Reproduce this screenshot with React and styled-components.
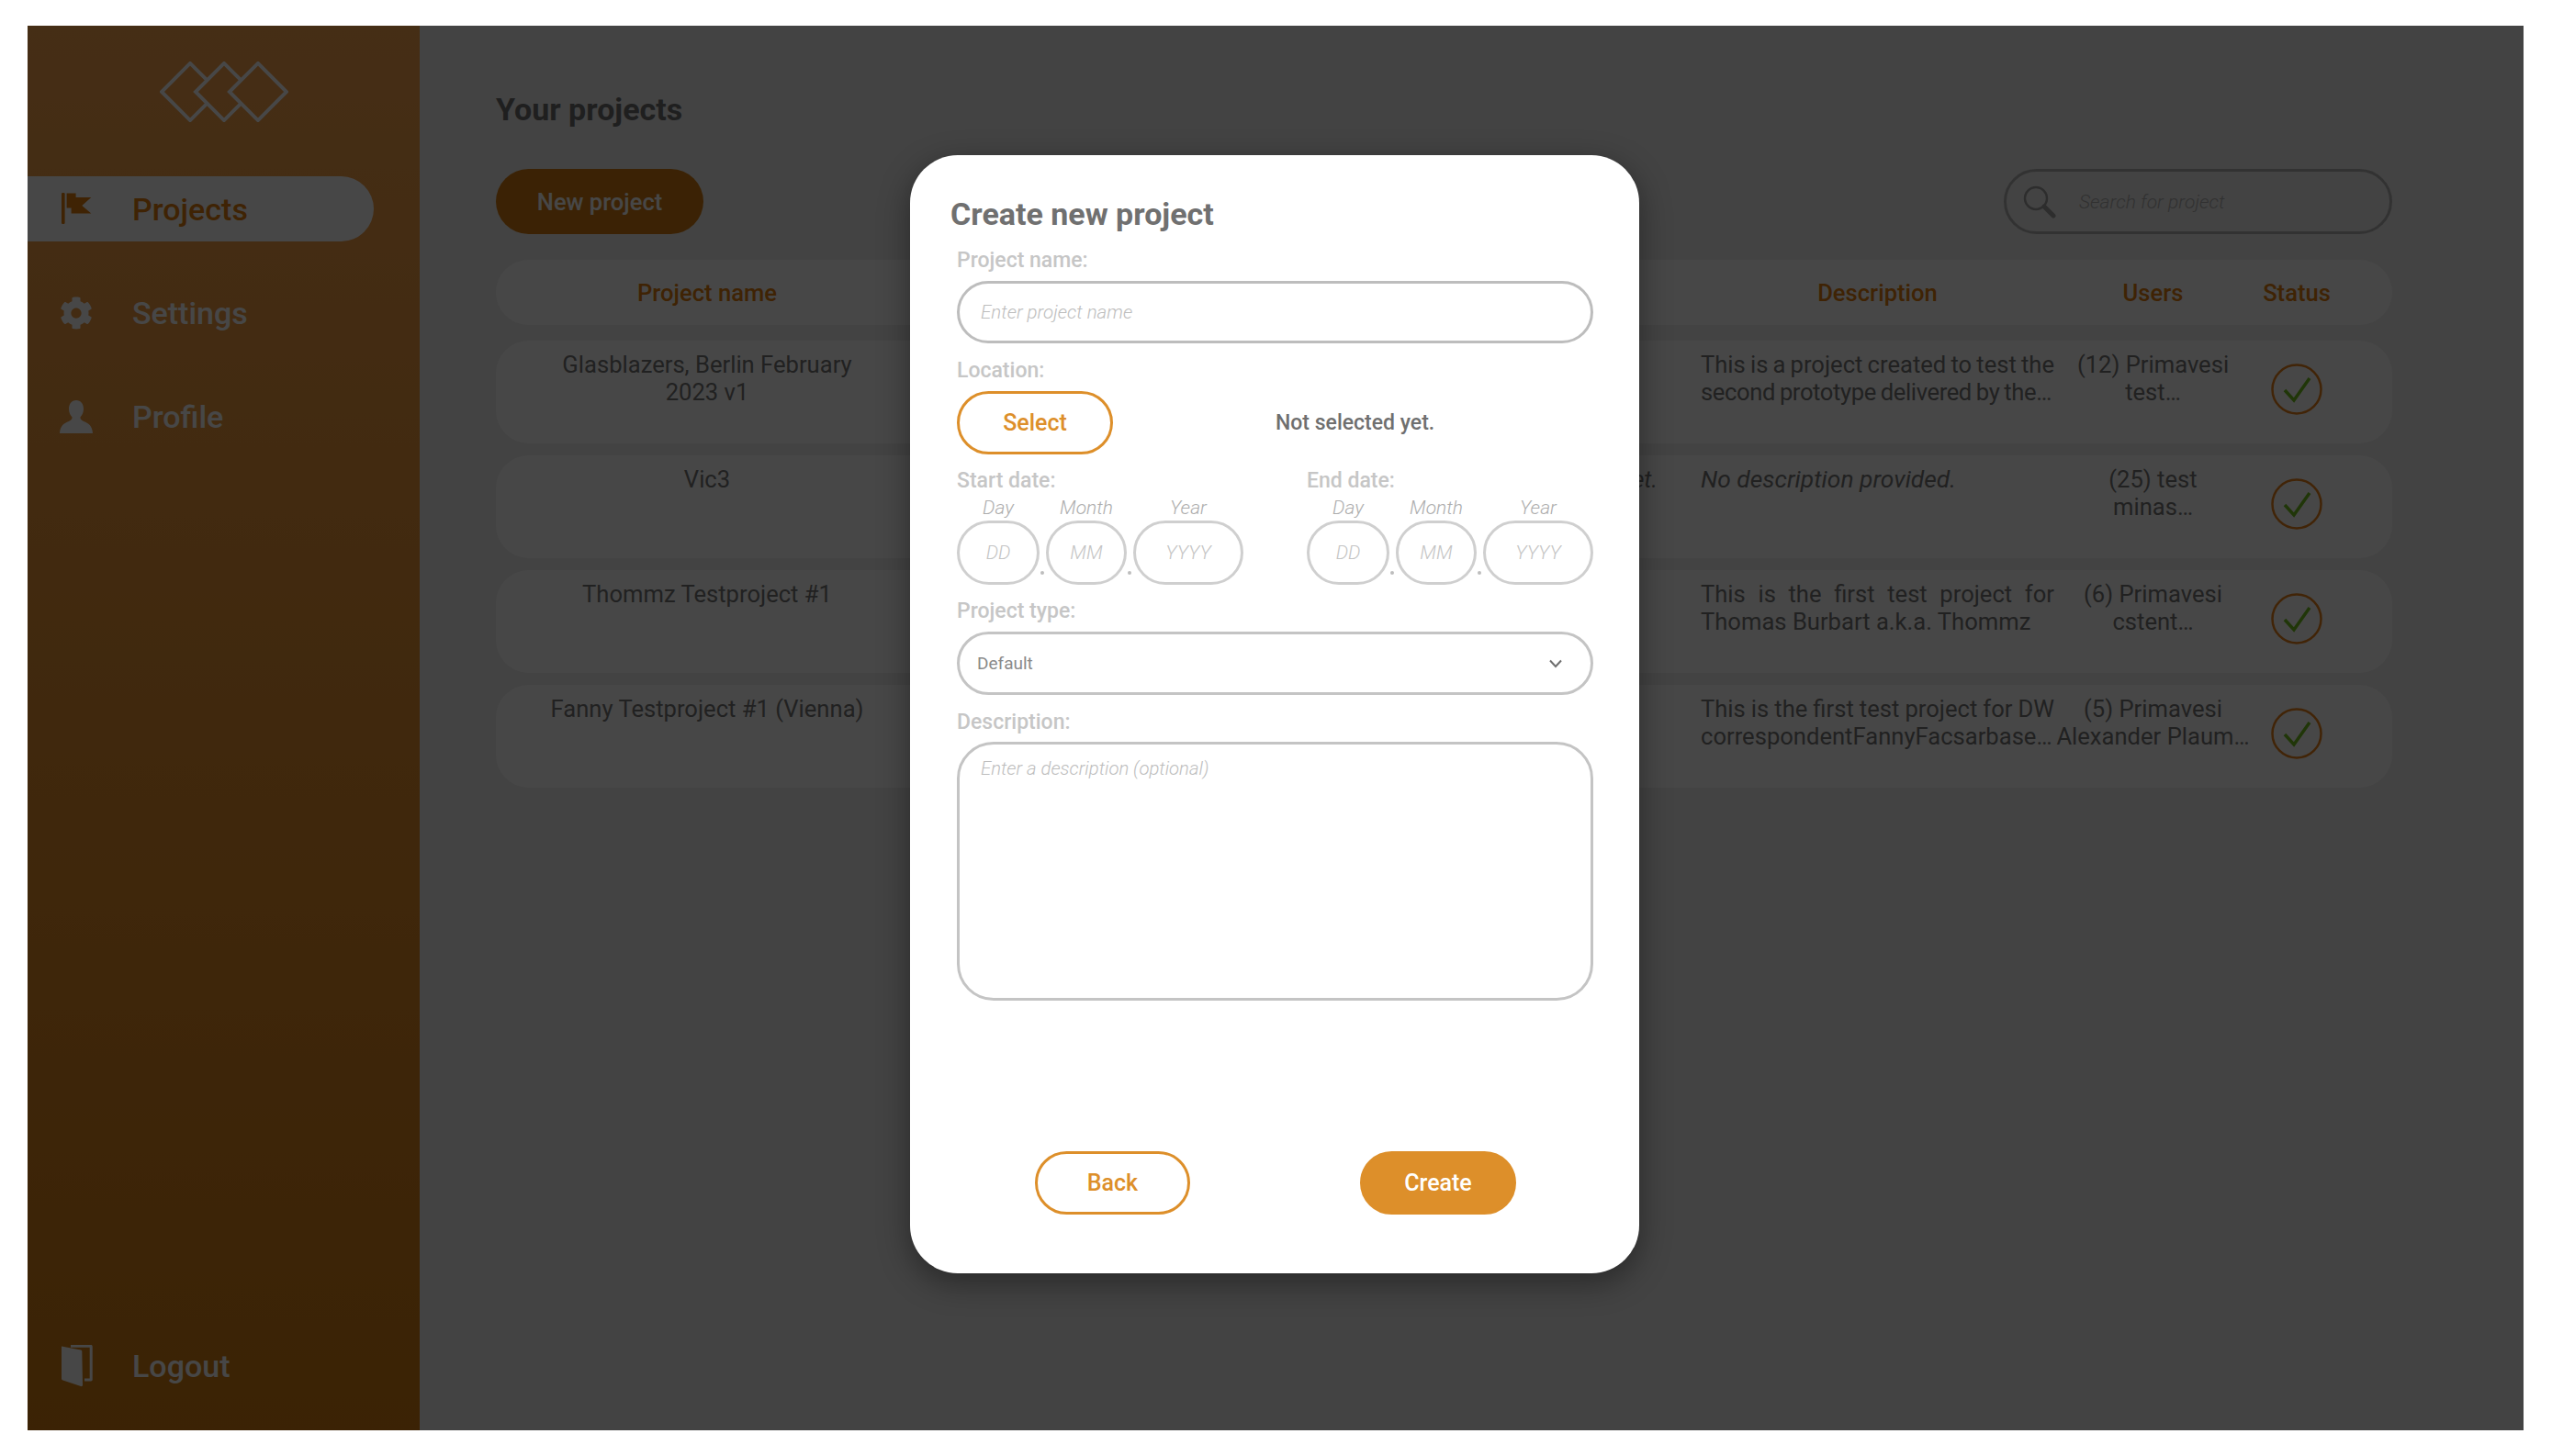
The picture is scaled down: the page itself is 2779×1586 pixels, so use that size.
import React from "react"
import styled, { createGlobalStyle } from "styled-components"
import { FaCog } from "react-icons/fa"

const ORANGE = "#dd8f2a"

const GlobalStyle = createGlobalStyle`
  * {
    box-sizing: border-box;
  }
  body {
    margin: 0;
    background: #fff;
    font-family: Roboto, "Liberation Sans", sans-serif;
  }
`

const Frame = styled.div`
  position: relative;
  display: flex;
  height: 1530px;
  margin: 28px 31px 28px 30px;
  background: #f1f1f1;
  overflow: hidden;
`

const Sidebar = styled.aside`
  display: flex;
  flex-direction: column;
  flex: 0 0 427px;
  padding: 39px 0 35px;
  background: linear-gradient(180deg, #f8a44e 0%, #d27c12 100%);
`

const Logo = styled.svg`
  display: block;
  align-self: center;
  width: 140px;
  height: 66px;
  margin-bottom: 59px;
`

const NavItem = styled.div`
  display: flex;
  align-items: center;
  gap: 43px;
  width: 377px;
  height: 71px;
  margin-bottom: ${props => (props.$last ? "0" : "42px")};
  margin-top: ${props => (props.$last ? "auto" : "0")};
  padding-left: 35px;
  border-radius: 0 36px 36px 0;
  background: ${props => (props.$active ? "#fff" : "transparent")};
  color: ${props => (props.$active ? "#e07f10" : "#fff")};
  font-size: 34px;
  font-weight: 500;
`

const NavIcon = styled.span`
  display: flex;
  justify-content: center;
  width: 36px;
  svg {
    display: block;
  }
`

const Main = styled.main`
  flex: 1;
  padding: 72px 143px 0 83px;
`

const Title = styled.h1`
  margin: 0 0 46px;
  font-size: 34px;
  line-height: 38px;
  font-weight: 700;
  color: #707070;
`

const Toolbar = styled.div`
  display: flex;
  justify-content: space-between;
  margin-bottom: 28px;
`

const NewButton = styled.button`
  width: 226px;
  height: 71px;
  border: none;
  border-radius: 36px;
  background: #d27c12;
  color: #fff;
  font: 500 25.5px Roboto, sans-serif;
`

const Search = styled.div`
  display: flex;
  align-items: center;
  gap: 25px;
  width: 423px;
  height: 71px;
  padding-left: 18px;
  border: 3px solid #b5b5b5;
  border-radius: 36px;
  color: #b0b0b0;
  font-size: 21px;
  font-style: italic;
  font-weight: 300;
`

const TableHead = styled.div`
  display: grid;
  grid-template-columns: 420px 872px 385px 215px 98px;
  align-items: center;
  height: 71px;
  margin-bottom: 17px;
  padding-left: 20px;
  border-radius: 36px;
  background: #fff;
  color: #e07f10;
  font-size: 25.6px;
  font-weight: 500;
  text-align: center;
`

const TableRow = styled.div`
  display: grid;
  grid-template-columns: 420px 872px 385px 215px 98px;
  height: 112px;
  margin-bottom: 13px;
  padding: 11px 0 0 20px;
  border-radius: 36px;
  background: #fff;
  color: #787878;
  font-size: 25.6px;
  line-height: 30px;
`

const NameCell = styled.div`
  padding: 0 30px;
  text-align: center;
`

const LocationCell = styled.div`
  padding-right: 47px;
  font-style: italic;
  text-align: right;
  white-space: nowrap;
`

const DescCell = styled.div`
  font-size: ${props => (props.$empty ? "26.4px" : "inherit")};
  font-style: ${props => (props.$empty ? "italic" : "normal")};
  word-spacing: ${props => (props.$squeeze ? "-2px" : "0")};
  text-align: justify;
`

const TightLine = styled.span`
  letter-spacing: -0.4px;
  word-spacing: -1px;
  white-space: nowrap;
`

const UsersCell = styled.div`
  text-align: center;
  white-space: nowrap;
`

const StatusCell = styled.div`
  display: flex;
  justify-content: center;
  padding-top: 14px;
`

const Overlay = styled.div`
  position: absolute;
  inset: 0;
  display: flex;
  justify-content: center;
  padding: 141px 2px 0 0;
  background: rgba(0, 0, 0, 0.72);
`

const Modal = styled.section`
  display: flex;
  flex-direction: column;
  width: 794px;
  height: 1218px;
  padding: 45px 50px 64px 44px;
  border-radius: 52px;
  background: #fff;
  box-shadow: 0 10px 34px rgba(0, 0, 0, 0.4);
`

const ModalTitle = styled.h2`
  margin: 0 0 18px;
  font-size: 34px;
  line-height: 38px;
  font-weight: 700;
  color: #707070;
`

const Form = styled.div`
  display: flex;
  flex-direction: column;
  flex: 1;
  margin-left: 7px;
`

const Label = styled.label`
  display: block;
  margin-top: 1px;
  margin-bottom: ${props => (props.$gap || 10) - 1}px;
  font-size: 23px;
  line-height: 26px;
  font-weight: 500;
  color: #c6c6c6;
`

const Field = styled.div`
  margin-bottom: ${props => props.$gap || 16}px;
`

const TextInput = styled.input`
  display: block;
  width: 100%;
  height: 68px;
  padding: 0 23px;
  border: 3px solid #bdbdbd;
  border-radius: 34px;
  outline: none;
  background: #fff;
  font: italic 300 20.5px Roboto, sans-serif;
  &::placeholder {
    color: #bdbdbd;
    opacity: 1;
  }
`

const LocationRow = styled.div`
  display: flex;
  align-items: center;
  gap: 177px;
`

const OutlineButton = styled.button`
  width: ${props => props.$width}px;
  height: 69px;
  border: 3px solid ${ORANGE};
  border-radius: 35px;
  background: #fff;
  color: ${ORANGE};
  font: 500 25px Roboto, sans-serif;
`

const SolidButton = styled(OutlineButton)`
  background: ${ORANGE};
  color: #fff;
`

const LocationText = styled.span`
  font-size: 23px;
  font-weight: 500;
  color: #6f6f6f;
`

const DateRow = styled.div`
  display: grid;
  grid-template-columns: 312px 312px;
  justify-content: space-between;
  margin-bottom: 15px;
`

const DateParts = styled.div`
  display: grid;
  grid-template-columns: 90px 88px 120px;
  column-gap: 7px;
`

const DatePart = styled.div`
  position: relative;
  &:not(:last-child)::after {
    content: "";
    position: absolute;
    right: -5px;
    bottom: 11px;
    width: 4px;
    height: 4px;
    border-radius: 50%;
    background: #bdbdbd;
  }
`

const DateCaption = styled.div`
  height: 24px;
  margin-bottom: 2px;
  font-size: 21px;
  line-height: 24px;
  font-style: italic;
  font-weight: 300;
  color: #adadad;
  text-align: center;
`

const DateInput = styled.input`
  display: block;
  width: 100%;
  height: 70px;
  padding: 0;
  border: 3px solid #cfcfcf;
  border-radius: 35px;
  outline: none;
  background: #fff;
  font: italic 300 21px Roboto, sans-serif;
  text-align: center;
  &::placeholder {
    color: #c4c4c4;
    opacity: 1;
  }
`

const SelectBox = styled.div`
  display: flex;
  align-items: center;
  justify-content: space-between;
  height: 69px;
  padding: 0 30px 0 19px;
  border: 3px solid #c4c4c4;
  border-radius: 35px;
  color: #8a8a8a;
  font-size: 19px;
`

const TextArea = styled.textarea`
  display: block;
  width: 100%;
  height: 282px;
  padding: 14px 23px;
  border: 3px solid #c4c4c4;
  border-radius: 40px;
  outline: none;
  resize: none;
  font: italic 300 20.3px Roboto, sans-serif;
  &::placeholder {
    color: #bdbdbd;
    opacity: 1;
  }
`

const Actions = styled.div`
  display: flex;
  justify-content: space-between;
  margin: auto 84px 0 85px;
`

const projects = [
  {
    name: "Glasblazers, Berlin February 2023 v1",
    desc: "This is a project created to test the",
    tight: "second prototype delivered by the…",
    squeeze: true,
    users: ["(12) Primavesi", "test…"],
  },
  {
    name: "Vic3",
    location: "Not selected yet.",
    desc: "No description provided.",
    empty: true,
    users: ["(25) test", "minas…"],
  },
  {
    name: "Thommz Testproject #1",
    desc: "This is the first test project for Thomas Burbart a.k.a. Thommz",
    users: ["(6) Primavesi", "cstent…"],
  },
  {
    name: "Fanny Testproject #1 (Vienna)",
    desc: "This is the first test project for DW correspondentFannyFacsarbase…",
    squeeze: true,
    users: ["(5) Primavesi", "Alexander Plaum…"],
  },
]

const FlagIcon = () => (
  <svg width="36" height="36" viewBox="0 0 36 36" fill="currentColor">
    <rect x="2" y="0" width="3.6" height="34" rx="1.2" />
    <path d="M7.6 .6h10v4.4h16.7l-10 9 10 8.6H12.6v-6H7.6z" />
  </svg>
)

const UserIcon = () => (
  <svg width="36" height="36" viewBox="0 0 36 36" fill="currentColor">
    <path d="M18 0c5 0 8 4 8 9.500 0 4-1.700 7-3.600 9 .1 2 1 3.300 3.800 4.500 5 2 9.300 4.500 9.800 13H0c.5-8.500 4.800-11 9.800-13 2.800-1.200 3.700-2.500 3.800-4.500-1.900-2-3.600-5-3.600-9C10 4 13 0 18 0z" />
  </svg>
)

const DoorIcon = () => (
  <svg width="36" height="46" viewBox="0 0 36 46" fill="currentColor">
    <path d="M2 1.500 23 5.500c.8.2 1.300.8 1.300 1.700L25 43.500c0 1.300-.9 2-2 1.600L3.500 38.600C2.500 38.200 2 37.500 2 36.500z" />
    <path d="M12 0h22c1 0 1.700.7 1.700 1.700v36c0 1-.7 1.700-1.700 1.700h-7v-2.800h5.700V2.800H12z" />
  </svg>
)

const SearchIcon = () => (
  <svg width="36" height="36" viewBox="0 0 36 36" fill="none" stroke="#a0a0a0">
    <circle cx="14" cy="14" r="12" strokeWidth="2.500" />
    <path d="M23 23l10 10" strokeWidth="5" strokeLinecap="round" />
  </svg>
)

const StatusIcon = () => (
  <svg width="56" height="56" viewBox="0 0 56 56" fill="none">
    <circle cx="28" cy="28" r="26.500" stroke="#e8821c" strokeWidth="2.500" />
    <path d="M15 29l10 11 17-24" stroke="#73c21f" strokeWidth="3.500" />
  </svg>
)

// each diamond hides the right corner of the one before it
const LogoMark = () => (
  <Logo viewBox="0 0 142 67" fill="none" stroke="#fff" strokeWidth="4">
    <path d="M52.250 20.750 33.500 2 2 33.500 33.500 65l18.750-18.750" />
    <path d="M89.750 20.750 71 2 39.500 33.500 71 65l18.750-18.750" />
    <path d="M108.500 2 140 33.500 108.500 65 77 33.500z" />
  </Logo>
)

const DateGroup = ({ label }) => (
  <div>
    <Label $gap={5}>{label}</Label>
    <DateParts>
      <DatePart>
        <DateCaption>Day</DateCaption>
        <DateInput placeholder="DD" />
      </DatePart>
      <DatePart>
        <DateCaption>Month</DateCaption>
        <DateInput placeholder="MM" />
      </DatePart>
      <DatePart>
        <DateCaption>Year</DateCaption>
        <DateInput placeholder="YYYY" />
      </DatePart>
    </DateParts>
  </div>
)

const App = () => (
  <>
    <GlobalStyle />
    <Frame>
      <Sidebar>
        <LogoMark />
        <NavItem $active>
          <NavIcon><FlagIcon /></NavIcon>
          Projects
        </NavItem>
        <NavItem>
          <NavIcon><FaCog size={36} /></NavIcon>
          Settings
        </NavItem>
        <NavItem>
          <NavIcon><UserIcon /></NavIcon>
          Profile
        </NavItem>
        <NavItem $last>
          <NavIcon><DoorIcon /></NavIcon>
          Logout
        </NavItem>
      </Sidebar>

      <Main>
        <Title>Your projects</Title>
        <Toolbar>
          <NewButton>New project</NewButton>
          <Search>
            <SearchIcon />
            Search for project
          </Search>
        </Toolbar>
        <TableHead>
          <span>Project name</span>
          <span />
          <span>Description</span>
          <span>Users</span>
          <span>Status</span>
        </TableHead>
        {projects.map(p => (
          <TableRow key={p.name}>
            <NameCell>{p.name}</NameCell>
            <LocationCell>{p.location}</LocationCell>
            <DescCell $empty={p.empty} $squeeze={p.squeeze}>
              {p.desc} {p.tight && <TightLine>{p.tight}</TightLine>}
            </DescCell>
            <UsersCell>{p.users[0]}<br />{p.users[1]}</UsersCell>
            <StatusCell><StatusIcon /></StatusCell>
          </TableRow>
        ))}
      </Main>

      <Overlay>
        <Modal>
          <ModalTitle>Create new project</ModalTitle>
          <Form>
            <Field>
              <Label>Project name:</Label>
              <TextInput placeholder="Enter project name" />
            </Field>
            <Field $gap={15}>
              <Label>Location:</Label>
              <LocationRow>
                <OutlineButton $width={170}>Select</OutlineButton>
                <LocationText>Not selected yet.</LocationText>
              </LocationRow>
            </Field>
            <DateRow>
              <DateGroup label="Start date:" />
              <DateGroup label="End date:" />
            </DateRow>
            <Field>
              <Label>Project type:</Label>
              <SelectBox>
                Default
                <svg width="16" height="10" viewBox="0 0 16 10" fill="none" stroke="#6f6f6f" strokeWidth="2">
                  <path d="M2 1.500l6 6.500 6-6.500" />
                </svg>
              </SelectBox>
            </Field>
            <Field>
              <Label $gap={9}>Description:</Label>
              <TextArea placeholder="Enter a description (optional)" />
            </Field>
            <Actions>
              <OutlineButton $width={169}>Back</OutlineButton>
              <SolidButton $width={170}>Create</SolidButton>
            </Actions>
          </Form>
        </Modal>
      </Overlay>
    </Frame>
  </>
)

export default App
